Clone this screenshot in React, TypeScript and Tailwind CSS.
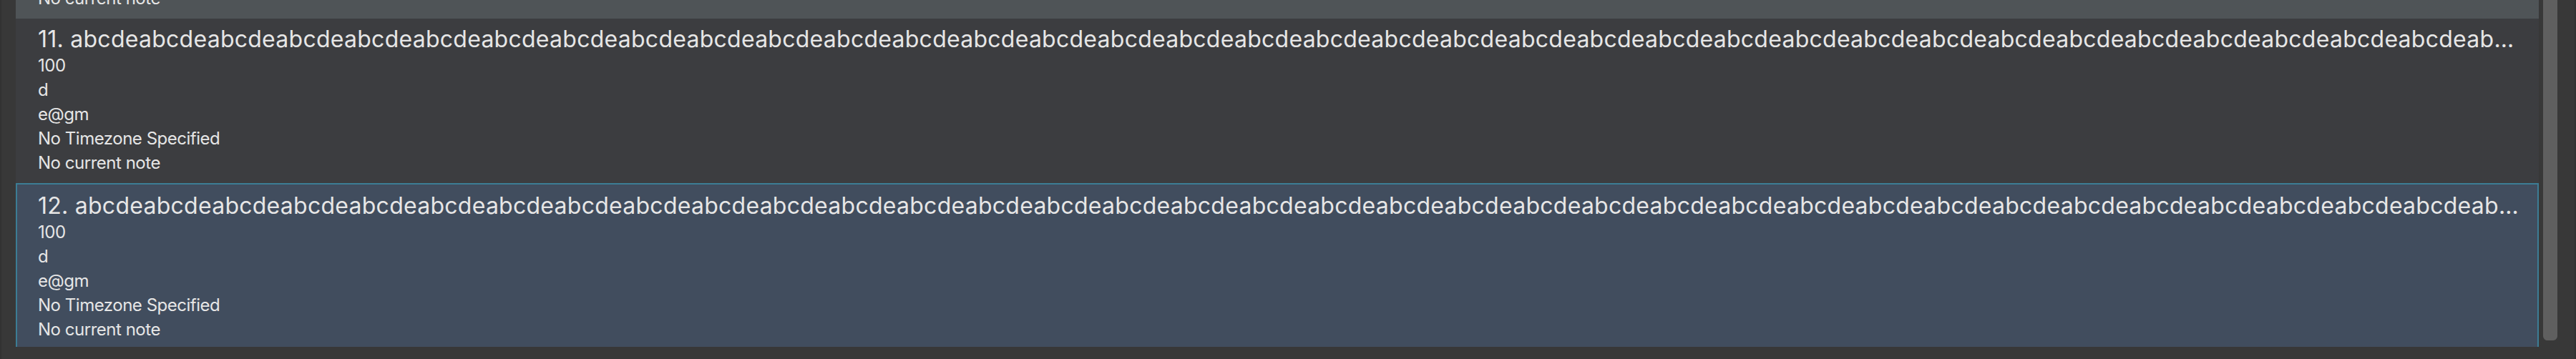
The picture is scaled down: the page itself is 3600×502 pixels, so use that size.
type Person = {
  id: number;
  name: string;
  phone: string;
  address: string;
  email: string;
  timezone: string;
  note: string;
};

const longName = "abcde".repeat(60);

const people: Person[] = [10, 11, 12].map((id) => ({
  id,
  name: longName,
  phone: "100",
  address: "d",
  email: "e@gm",
  timezone: "No Timezone Specified",
  note: "No current note",
}));

// fila de la lista: 10 = hover, 11 = normal, 12 = seleccionada
const PersonCard = ({ person, variant }: { person: Person; variant: "hover" | "normal" | "selected" }) => {
  const box =
    variant === "selected"
      ? "bg-[#414d5e] border-2 border-b-0 border-[#3c7d95] pt-[10px] pr-[22px] pl-[29px]"
      : variant === "hover"
      ? "bg-[#4f5457] pt-[9px] pr-6 pl-[31px]"
      : "bg-[#3c3d40] pt-[9px] pr-6 pl-[31px]";

  const line = "text-[24px] leading-[34px] tracking-[-0.02em]";

  return (
    <li className={`h-[230px] shrink-0 pb-[11px] text-[#e6e6e6] ${box}`}>
      <p className="truncate text-[32px] leading-[40px] tracking-[0.008em]">
        {person.id}. {person.name}
      </p>
      <p className={line}>{person.phone}</p>
      <p className={line}>{person.address}</p>
      <p className={line}>{person.email}</p>
      <p className={line}>{person.timezone}</p>
      <p className={line}>{person.note}</p>
    </li>
  );
};

export default function App() {
  return (
    <div
      className="flex h-[502px] w-full overflow-hidden border-x-2 border-[#323232] bg-[#383838]"
      style={{ fontFamily: "Inter, 'Noto Sans', sans-serif" }}
    >
      <div className="h-[485px] min-w-0 flex-1 overflow-hidden pl-5">
        <ul className="-mt-[204px] flex flex-col">
          {people.map((p) => (
            <PersonCard
              key={p.id}
              person={p}
              variant={p.id === 10 ? "hover" : p.id === 12 ? "selected" : "normal"}
            />
          ))}
        </ul>
      </div>
      <div className="ml-[6px] mr-6 w-5 shrink-0">
        <div className="h-[476px] rounded-b-md bg-[#5f5f5f]" />
      </div>
    </div>
  );
}
